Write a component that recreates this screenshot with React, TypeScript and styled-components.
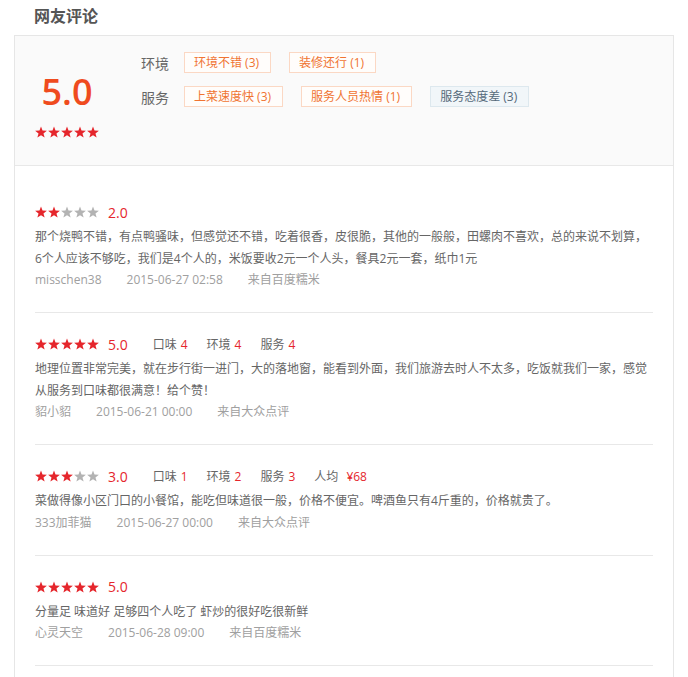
import React from "react";
import styled, { createGlobalStyle } from "styled-components";

const GlobalStyle = createGlobalStyle`
  html, body {
    margin: 0;
    padding: 0;
    background: #fff;
  }
  body {
    font-family: "Open Sans", "Noto Sans CJK SC", sans-serif;
    color: #666;
    font-size: 12px;
  }
`;

const Page = styled.div`
  padding: 0 14px;
`;

const Title = styled.h2`
  margin: 0;
  padding-left: 20px;
  height: 35px;
  line-height: 32px;
  font-size: 16px;
  font-weight: bold;
  color: #555;
`;

const Panel = styled.div`
  border: 1px solid #e6e6e6;
  border-bottom: none;
`;

const Summary = styled.div`
  display: flex;
  align-items: flex-start;
  height: 130px;
  box-sizing: border-box;
  padding: 16px 20px 0;
  background: #fafafa;
  border-bottom: 1px solid #e8e8e8;
`;

const ScoreCol = styled.div`
  width: 64px;
  margin-top: 20px;
  display: flex;
  flex-direction: column;
  align-items: center;
`;

const BigScore = styled.div`
  font-size: 36px;
  line-height: 40px;
  font-weight: 600;
  color: #ef4b1e;
`;

const BigStars = styled.div`
  margin-top: 14px;
  display: flex;
`;

const TagsCol = styled.div`
  margin-left: 42px;
  display: flex;
  flex-direction: column;
  gap: 13px;
`;

const TagRow = styled.div`
  display: flex;
  align-items: center;
  height: 21px;
`;

const TagLabel = styled.span`
  font-size: 14px;
  color: #666;
  width: 43px;
`;

const Tag = styled.span<{ $neg?: boolean }>`
  display: inline-block;
  height: 21px;
  box-sizing: border-box;
  line-height: 19px;
  padding: 0 11px 0 9px;
  margin-right: 18px;
  font-size: 12px;
  white-space: nowrap;
  border: 1px solid ${(p) => (p.$neg ? "#dde8ee" : "#fbd8c4")};
  background: ${(p) => (p.$neg ? "#f1f6f9" : "#fffdfb")};
  color: ${(p) => (p.$neg ? "#55697a" : "#f07432")};
`;

const List = styled.div`
  padding: 15px 20px 30px;
`;

const Item = styled.div`
  padding: 21px 0 21px;
  border-bottom: 1px solid #e8e8e8;
`;

const ItemHead = styled.div`
  display: flex;
  align-items: center;
  height: 20px;
`;

const Stars = styled.span`
  display: inline-flex;
  gap: 1px;
`;

const Score = styled.span`
  margin-left: 9px;
  font-size: 14px;
  color: #e5262c;
  margin-right: 25px;
`;

const Sub = styled.span`
  margin-right: 19px;
  font-size: 12px;
  color: #666;
`;

const SubNum = styled.span<{ $wide?: boolean }>`
  margin-left: ${(p) => (p.$wide ? "8px" : "4px")};
  color: #e5262c;
`;

const Text = styled.p`
  margin: 4px 0 0;
  font-size: 12px;
  line-height: 21.5px;
  color: #666;
`;

const Meta = styled.div`
  display: flex;
  line-height: 22px;
  font-size: 12px;
  color: #a0a0a0;
`;

const MetaItem = styled.span`
  margin-right: 25px;
`;

const Star: React.FC<{ on: boolean }> = ({ on }) => (
  <svg width="12" height="12" viewBox="0 0 12 12">
    <polygon
      points="6,0.4 7.53,4.5 11.9,4.68 8.47,7.4 9.64,11.62 6,9.2 2.36,11.62 3.53,7.4 0.1,4.68 4.47,4.5"
      fill={on ? "#e5262c" : "#b3b3b3"}
    />
  </svg>
);

const StarRow: React.FC<{ n: number }> = ({ n }) => (
  <Stars>
    {[0, 1, 2, 3, 4].map((i) => (
      <Star key={i} on={i < n} />
    ))}
  </Stars>
);

type Review = {
  stars: number;
  score: string;
  subs?: { label: string; value: string; wide?: boolean }[];
  text: string;
  user: string;
  date: string;
  source: string;
};

const reviews: Review[] = [
  {
    stars: 2,
    score: "2.0",
    text: "那个烧鸭不错，有点鸭骚味，但感觉还不错，吃着很香，皮很脆，其他的一般般，田螺肉不喜欢，总的来说不划算，6个人应该不够吃，我们是4个人的，米饭要收2元一个人头，餐具2元一套，纸巾1元",
    user: "misschen38",
    date: "2015-06-27 02:58",
    source: "来自百度糯米",
  },
  {
    stars: 5,
    score: "5.0",
    subs: [
      { label: "口味", value: "4" },
      { label: "环境", value: "4" },
      { label: "服务", value: "4" },
    ],
    text: "地理位置非常完美，就在步行街一进门，大的落地窗，能看到外面，我们旅游去时人不太多，吃饭就我们一家，感觉从服务到口味都很满意！给个赞！",
    user: "貂小貂",
    date: "2015-06-21 00:00",
    source: "来自大众点评",
  },
  {
    stars: 3,
    score: "3.0",
    subs: [
      { label: "口味", value: "1" },
      { label: "环境", value: "2" },
      { label: "服务", value: "3" },
      { label: "人均", value: "¥68", wide: true },
    ],
    text: "菜做得像小区门口的小餐馆，能吃但味道很一般，价格不便宜。啤酒鱼只有4斤重的，价格就贵了。",
    user: "333加菲猫",
    date: "2015-06-27 00:00",
    source: "来自大众点评",
  },
  {
    stars: 5,
    score: "5.0",
    text: "分量足 味道好 足够四个人吃了 虾炒的很好吃很新鲜",
    user: "心灵天空",
    date: "2015-06-28 09:00",
    source: "来自百度糯米",
  },
];

export default function App() {
  return (
    <>
      <GlobalStyle />
      <Page>
        <Title>网友评论</Title>
        <Panel>
          <Summary>
            <ScoreCol>
              <BigScore>5.0</BigScore>
              <BigStars>
                <StarRow n={5} />
              </BigStars>
            </ScoreCol>
            <TagsCol>
              <TagRow>
                <TagLabel>环境</TagLabel>
                <Tag>环境不错 (3)</Tag>
                <Tag>装修还行 (1)</Tag>
              </TagRow>
              <TagRow>
                <TagLabel>服务</TagLabel>
                <Tag>上菜速度快 (3)</Tag>
                <Tag>服务人员热情 (1)</Tag>
                <Tag $neg>服务态度差 (3)</Tag>
              </TagRow>
            </TagsCol>
          </Summary>
          <List>
            {reviews.map((r, i) => (
              <Item key={i}>
                <ItemHead>
                  <StarRow n={r.stars} />
                  <Score>{r.score}</Score>
                  {r.subs?.map((s) => (
                    <Sub key={s.label}>
                      {s.label}
                      <SubNum $wide={s.wide}>{s.value}</SubNum>
                    </Sub>
                  ))}
                </ItemHead>
                <Text>{r.text}</Text>
                <Meta>
                  <MetaItem>{r.user}</MetaItem>
                  <MetaItem>{r.date}</MetaItem>
                  <MetaItem>{r.source}</MetaItem>
                </Meta>
              </Item>
            ))}
          </List>
        </Panel>
      </Page>
    </>
  );
}
